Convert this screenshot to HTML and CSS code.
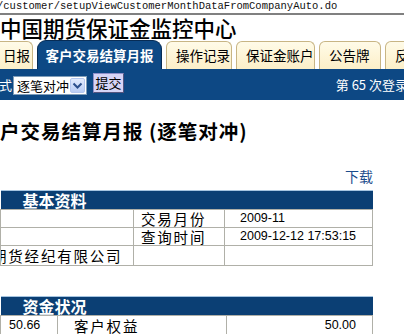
FILE: index.html
```html
<!DOCTYPE html>
<html>
<head>
<meta charset="utf-8">
<link rel="stylesheet" href="styles.css">
</head>
<body>
<div class="url">/customer/setupViewCustomerMonthDataFromCompanyAuto.do</div>
<h1 class="title">中国期货保证金监控中心</h1>
<nav class="tabs">
  <span class="tab tab-cut">日报</span>
  <span class="tab active">客户交易结算月报</span>
  <span class="tab">操作记录</span>
  <span class="tab">保证金账户</span>
  <span class="tab">公告牌</span>
  <span class="tab">反映问题</span>
</nav>
<div class="bar">
  <div class="bar-left">
    <span class="bar-label">式</span>
    <span class="select"><span class="select-text">逐笔对冲</span><span class="select-btn"><svg width="11" height="8" viewBox="0 0 11 8"><path d="M1.5 1.5 L5.5 5.5 L9.5 1.5" fill="none" stroke="#2b4f8c" stroke-width="2"/></svg></span></span>
    <button class="submit">提交</button>
  </div>
  <div class="bar-right">第 65 次登录</div>
</div>
<h2 class="heading">户交易结算月报&nbsp;(逐笔对冲)</h2>
<div class="download"><a href="#">下载</a></div>
<div class="tblwrap">
<table class="info">
  <colgroup><col class="w1"><col class="w2"><col></colgroup>
  <tr><th colspan="3"><span class="th-text">基本资料</span></th></tr>
  <tr><td></td><td class="c2">交易月份</td><td class="c3 num">2009-11</td></tr>
  <tr><td></td><td class="c2">查询时间</td><td class="c3 num">2009-12-12 17:53:15</td></tr>
  <tr class="tall"><td class="cut">期货经纪有限公司</td><td class="c2"></td><td class="c3"></td></tr>
</table>
</div>
<div class="tblwrap second">
<table class="fund">
  <colgroup><col class="v1"><col class="v2"><col></colgroup>
  <tr><th colspan="3"><span class="th-text">资金状况</span></th></tr>
  <tr><td class="f1 num">50.66</td><td class="f2">客户权益</td><td class="f3 num">50.00</td></tr>
</table>
</div>
</body>
</html>
```
FILE: styles.css
```css
html, body {
  margin: 0;
  padding: 0;
  background: #fff;
}
body {
  width: 404px;
  height: 334px;
  overflow: hidden;
  font-family: "Noto Sans CJK SC", "Liberation Sans", sans-serif;
  color: #000;
}
.url {
  height: 13px;
  font-family: "Liberation Mono", monospace;
  font-size: 10.5px;
  line-height: 12px;
  text-indent: -3px;
  white-space: nowrap;
  border-bottom: 2px solid #808080;
  color: #111;
}
.title {
  margin: 0;
  height: 24px;
  font-size: 21.5px;
  font-weight: 500;
  line-height: 25px;
  white-space: nowrap;
}
.tabs {
  display: flex;
  gap: 4px;
  height: 30px;
  align-items: flex-end;
  white-space: nowrap;
  overflow: hidden;
}
.tab {
  flex: none;
  box-sizing: border-box;
  height: 28px;
  padding: 0 9px;
  font-size: 13.5px;
  line-height: 26px;
  background: linear-gradient(#fffbe8, #fcefc8);
  border: 1px solid #c8b584;
  border-bottom: none;
  border-radius: 6px 6px 0 0;
  color: #000;
}
.tab-cut {
  margin-left: -8px;
  padding: 0 9px 0 10px;
  width: 41px;
}
.tab.active {
  height: 29px;
  width: 125px;
  padding: 0;
  text-align: center;
  background: #0d4985;
  border: 1px solid #072c55;
  border-bottom: none;
  border-radius: 9px 9px 0 0;
  color: #fff;
  font-weight: 700;
  font-size: 13.5px;
  line-height: 28px;
}
.tab:nth-child(3) { width: 66px; }
.tab:nth-child(4) { width: 79px; }
.tab:nth-child(5) { width: 62px; }
.bar {
  display: flex;
  justify-content: space-between;
  align-items: center;
  height: 31px;
  background: #0d4884;
  color: #fff;
  white-space: nowrap;
}
.bar-left {
  display: flex;
  align-items: center;
}
.bar-label {
  font-size: 13px;
  width: 14px;
  margin-left: -1px;
}
.select {
  display: flex;
  align-items: center;
  box-sizing: border-box;
  width: 74px;
  height: 19px;
  background: #fff;
  border: 1px solid #7f9db9;
  margin-top: 2px;
}
.select-text {
  flex: 1;
  color: #000;
  font-size: 13px;
  line-height: 17px;
  padding-left: 3px;
}
.select-btn {
  display: flex;
  align-items: center;
  justify-content: center;
  width: 15px;
  height: 15px;
  margin-right: 1px;
  background: linear-gradient(#e2ebfd, #b9cdf5);
  border: 1px solid #b4c7ef;
  border-radius: 2px;
  box-sizing: border-box;
}
.submit {
  margin: -3px 0 0 6px;
  padding: 0;
  width: 31px;
  height: 20px;
  font-family: "Noto Sans CJK SC", sans-serif;
  font-size: 13px;
  line-height: 18px;
  background: #d6d4f6;
  border: 1px solid #8f8fc8;
  border-right-color: #55557f;
  border-bottom-color: #55557f;
  color: #000;
}
.bar-right {
  font-size: 13px;
  margin-right: -4px;
}
.heading {
  margin: 18px 0 0;
  height: 25px;
  font-size: 19.5px;
  font-weight: 700;
  letter-spacing: 1px;
  line-height: 25px;
  white-space: nowrap;
}
.download {
  width: 373px;
  text-align: right;
  margin-top: 23px;
  height: 20px;
  font-size: 14px;
  line-height: 20px;
}
.download a {
  color: #1c4c8c;
  text-decoration: none;
}
.tblwrap {
  margin-top: 4px;
  width: 373px;
  overflow: hidden;
}
.tblwrap.second {
  margin-top: 30px;
}
table {
  border-collapse: collapse;
  width: 373px;
  table-layout: fixed;
}
.w1 { width: 133px; }
.w2 { width: 91px; }
.v1 { width: 57px; }
.v2 { width: 169px; }
th {
  height: 18px;
  padding: 0;
  background: #0b3f74;
  border-top: 1px solid #a5c4e0;
  text-align: left;
  color: #fff;
  font-size: 16px;
  font-weight: 700;
  line-height: 17px;
}
.th-text {
  margin-left: 22px;
}
td {
  border: 1px solid #b0b0a8;
  padding: 0;
  height: 17px;
  font-size: 14.5px;
  letter-spacing: 1.8px;
  line-height: 17px;
  vertical-align: middle;
  white-space: nowrap;
  overflow: hidden;
}
.info .c2 { padding-left: 7px; }
.info .c3 { padding-left: 15px; }
.info .tall td { height: 19px; }
.cut { text-indent: -9px; }
td.num {
  font-family: "Liberation Sans", sans-serif;
  font-size: 12.5px;
  letter-spacing: 0;
}
.fund .f1 { padding-left: 8px; }
.fund .f2 { padding-left: 16px; }
.fund .f3 { text-align: right; padding-right: 16px; }
.fund td { height: 19px; }
```
